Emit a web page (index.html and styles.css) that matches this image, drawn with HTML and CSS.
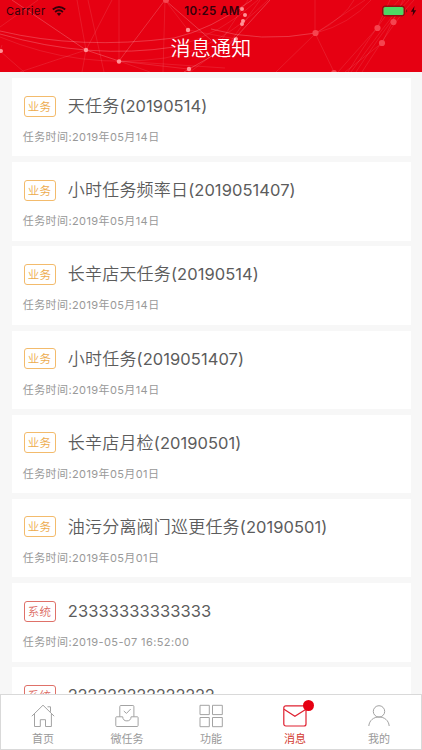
FILE: index.html
```
<!DOCTYPE html>
<html lang="zh-CN">
<head>
<meta charset="utf-8">
<title>消息通知</title>
<link rel="stylesheet" href="styles.css">
</head>
<body>
<div class="app">
  <header class="header">
    <svg class="network" viewBox="0 0 422 72" fill="none" stroke="#fff" stroke-opacity=".22" stroke-width=".7">
      <path d="M0 31Q80 50 174 38Q210 30 252 0M0 34Q90 60 174 47Q220 35 258 0M0 37Q80 70 165 58Q220 48 268 0M0 51L24 72M0 51L2 45M12 0L86 50L119 61L225 68M77 0L86 50L82 72M112 0L86 50M86 50L20 72M88 0L104 72M119 0V61L150 72M119 61L165 0L188 30L236 39M165 0L163 72M165 0L119 61M165 0L211 40M0 27L38 0M184 72L226 48L270 0M190 72L231 41L260 0M215 50L248 0M211 29Q260 43 316 33M315 0V33L334 72M316 33L276 72M316 33Q350 24 371 0M316 33L365 0M316 33Q345 17 354 0M348 72Q380 20 399 0M351 72Q385 25 405 0M356 72Q390 20 409 0M362 72Q395 20 414 0M345 72L382 43L403 0M338 72L377 28L390 0" stroke-opacity=".14"/>
      <path d="M0 31Q80 50 174 38Q210 30 252 0M0 34Q90 60 174 47M12 0L86 50L119 61L188 69M165 0L211 40M184 72L226 48L270 0M211 29Q260 43 316 33" stroke-opacity=".18"/>
      <g fill="#ff9296" stroke="none">
        <circle cx="1" cy="51" r="2"/><circle cx="86" cy="50" r="2.2"/><circle cx="119" cy="61.5" r="2.2"/><circle cx="188" cy="30" r="2.2"/><circle cx="189" cy="69" r="2.2"/><circle cx="242" cy="9" r="2"/><circle cx="245" cy="15" r="2"/><circle cx="243" cy="21" r="2"/><circle cx="242" cy="24" r="2"/><circle cx="236" cy="39" r="2"/>
      </g>
      <g fill="#f5444f" stroke="none">
        <circle cx="166" cy="0" r="3"/><circle cx="315.5" cy="33" r="3.1"/><circle cx="377.5" cy="28" r="3.1"/><circle cx="393.5" cy="22" r="3.1"/><circle cx="382" cy="43" r="3.1"/><circle cx="334" cy="73" r="3"/>
      </g>
    </svg>
    <div class="status">
      <div class="carrier">Carrier
        <svg width="14" height="10" viewBox="0 0 14 10" fill="none" stroke="#35000a" stroke-width="1.9"><path d="M.8 3.6Q7-1.6 13.2 3.6M3.1 5.9Q7 2.7 10.9 5.9"/><path d="M4.8 7.6Q7 5.9 9.2 7.6L7 9.9Z" fill="#35000a" stroke="none"/></svg>
      </div>
      <div class="clock">10:25 AM</div>
      <div class="power">
        <svg width="36" height="12" viewBox="0 0 36 12"><rect x=".5" y="1" width="22" height="10" rx="2.4" fill="#b00012" stroke="#7c1010" stroke-width=".8"/><rect x="1.5" y="2" width="20" height="8" rx="1.5" fill="#4cd964"/><path d="M24 4.5q1.3.3 1.3 1.5T24 7.5Z" fill="#7c1010"/><path d="M32.6 1L28.8 6.7h2.4l-.8 4.3 3.8-5.8h-2.4Z" fill="#35000a"/></svg>
      </div>
    </div>
    <h1 class="title">消息通知</h1>
  </header>
  <main class="list">
    <article class="card"><div class="row"><span class="tag">业务</span><h2>天任务<span class="num">(20190514)</span></h2></div><p>任务时间:2019年05月14日</p></article>
    <article class="card"><div class="row"><span class="tag">业务</span><h2>小时任务频率日<span class="num">(2019051407)</span></h2></div><p>任务时间:2019年05月14日</p></article>
    <article class="card"><div class="row"><span class="tag">业务</span><h2>长辛店天任务<span class="num">(20190514)</span></h2></div><p>任务时间:2019年05月14日</p></article>
    <article class="card"><div class="row"><span class="tag">业务</span><h2>小时任务<span class="num">(2019051407)</span></h2></div><p>任务时间:2019年05月14日</p></article>
    <article class="card"><div class="row"><span class="tag">业务</span><h2>长辛店月检<span class="num">(20190501)</span></h2></div><p>任务时间:2019年05月01日</p></article>
    <article class="card"><div class="row"><span class="tag">业务</span><h2>油污分离阀门巡更任务<span class="num">(20190501)</span></h2></div><p>任务时间:2019年05月01日</p></article>
    <article class="card"><div class="row"><span class="tag system">系统</span><h2><span class="num">23333333333333</span></h2></div><p>任务时间:2019-05-07 16:52:00</p></article>
    <article class="card"><div class="row"><span class="tag system">系统</span><h2><span class="num twos">222222222222222</span></h2></div></article>
  </main>
  <nav class="tabs">
    <a class="tab"><svg viewBox="0 0 24 24"><path d="M.8 12.2L12 1.2l11.2 11M3.5 10v12.5h5.8v-6.8h5.2v6.8h5.9V10M16.5 2.8h3v5"/></svg><span>首页</span></a>
    <a class="tab"><svg viewBox="0 0 24 24"><path d="M4.8 12.8V2.5q0-1 1-1h12.1q1 0 1 1v10.3M8.8 7l2.7 2.4L15.7 5M1.5 12.8h6.2q.3 4.1 4.2 4.1t4.2-4.1h6.3q.7 0 .7.7v8q0 1-1 1H1.8q-1 0-1-1v-8q0-.7.7-.7Z"/></svg><span>微任务</span></a>
    <a class="tab"><svg viewBox="0 0 24 24"><path d="M1 1.3h9.3v9.3H1ZM13.5 1.3h9.8v9.3h-9.8ZM1 13.5h9.3v9.2H1ZM13.5 13.5h9.8v9.2h-9.8Z"/></svg><span>功能</span></a>
    <a class="tab active"><svg viewBox="0 0 24 24"><rect x=".8" y="1.8" width="22.2" height="20.2" rx="2"/><path d="M1 5.2l10.9 7L23 5.2"/></svg><i class="badge"></i><span>消息</span></a>
    <a class="tab"><svg viewBox="0 0 24 24"><circle cx="12" cy="7.4" r="5.7"/><path d="M1.8 22c.5-5.7 4.9-9 10.2-9s9.7 3.3 10.2 9"/></svg><span>我的</span></a>
  </nav>
</div>
</body>
</html>
```
FILE: styles.css
```
* { box-sizing: border-box; }
body { margin: 0; font-family: Inter, "Noto Sans CJK SC", sans-serif; background: #f7f7f7; }
.app { width: 422px; height: 750px; overflow: hidden; display: flex; flex-direction: column; }
.header { position: relative; height: 72px; flex: none; background: #e60012; overflow: hidden; }
.network { position: absolute; inset: 0; width: 422px; height: 72px; }
.status { position: relative; display: grid; grid-template-columns: 1fr auto 1fr; height: 22px; padding: 0 4px 0 6px; align-items: center; color: #35000a; font-size: 11px; line-height: 22px; }
.carrier { display: flex; align-items: center; gap: 6px; letter-spacing: .5px; }
.clock { font-size: 11.5px; font-weight: 600; letter-spacing: .4px; }
.power { display: flex; justify-content: flex-end; }
.title { position: relative; margin: 12px 0 0; text-align: center; color: #fff; font-size: 20px; line-height: 30px; font-weight: 350; letter-spacing: .3px; }
.list { flex: 1; min-height: 0; overflow: hidden; padding: 6px 11.5px 0; display: flex; flex-direction: column; gap: 5.8px; }
.card { flex: none; height: 78.4px; background: #fff; padding: 16px 11.5px 0 12px; }
.row { display: flex; align-items: center; height: 24px; }
.tag { width: 32px; height: 21px; border: 1px solid #f3bb6c; border-radius: 3px; color: #edab4d; font-size: 11.5px; line-height: 20px; text-align: center; font-weight: 350; letter-spacing: .3px; }
.tag.system { border-color: #df7169; color: #dc6860; }
.row h2 { margin: 0 0 0 12.3px; color: #5c5c5c; font-size: 17px; line-height: 24px; font-weight: 350; white-space: nowrap; letter-spacing: .2px; }
.num { font-size: 16.5px; font-weight: 400; letter-spacing: .06px; }
.num.twos { letter-spacing: -.28px; }
.card p { margin: 11px 0 0 -.7px; color: #999; font-size: 11px; line-height: 16px; letter-spacing: .4px; }
.tabs { flex: none; height: 56px; border: 1px solid #d9d9d9; background: #fff; display: flex; }
.tab { position: relative; flex: 1; display: flex; flex-direction: column; align-items: center; padding-top: 9px; color: #999; font-size: 11px; line-height: 16px; }
.tab svg { width: 24px; height: 24px; fill: none; stroke: #a3a3a3; stroke-width: 1; }
.tab span { margin-top: 3px; }
.tab.active { color: #d33b32; }
.tab.active svg { stroke: #df2030; stroke-width: 1.2; }
.badge { position: absolute; top: 5px; left: calc(50% + 8px); width: 11px; height: 11px; border-radius: 50%; background: #e60012; }
```
